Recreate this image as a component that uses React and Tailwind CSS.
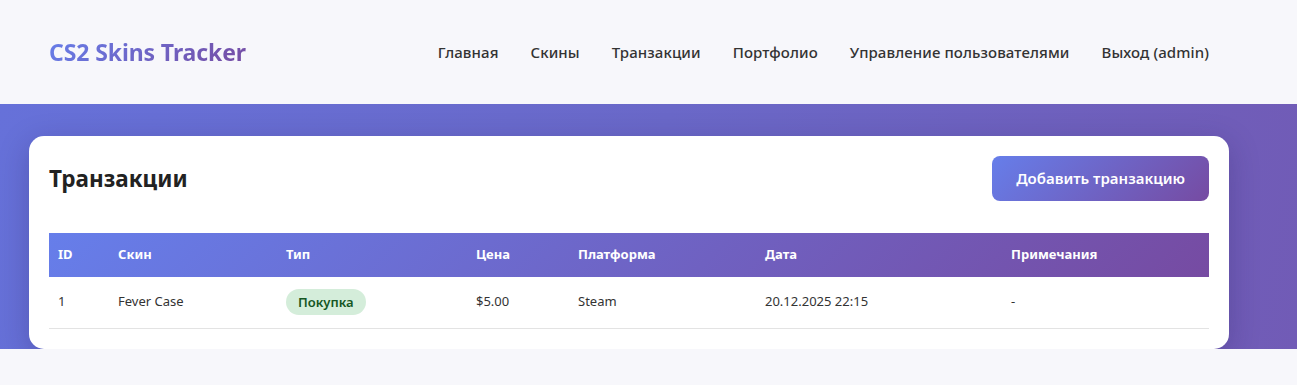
export default function App() {
  const font = { fontFamily: '"Noto Sans", "Open Sans", sans-serif' };
  const navItems = ["Главная", "Скины", "Транзакции", "Портфолио", "Управление пользователями", "Выход (admin)"];
  return (
    <div className="min-h-[385px] bg-[#f7f7fb] text-[#333]" style={font}>
      <header className="h-[104px] bg-[#f7f7fb]">
        <div className="ml-[29px] w-[1200px] h-full px-[20px] flex items-center justify-between">
          <div className="text-[23px] font-bold bg-[linear-gradient(135deg,#667eea_0%,#764ba2_100%)] bg-clip-text text-transparent tracking-[-0.1px]">
            CS2 Skins Tracker
          </div>
          <nav className="flex items-center gap-[32px]">
            {navItems.map((n) => (
              <a key={n} className="text-[15px] font-medium text-[#333] tracking-[0.1px]">{n}</a>
            ))}
          </nav>
        </div>
      </header>
      <main className="bg-[linear-gradient(100deg,#6671d9_0%,#6a68c8_50%,#715bb6_100%)] pt-[32px]">
        <div className="ml-[29px] w-[1200px] bg-white rounded-[15px] shadow-[0_8px_30px_rgba(30,20,80,0.25)] px-[20px] pt-[20px] pb-[20px]">
          <div className="flex items-center justify-between mb-[32px]">
            <h2 className="text-[22.5px] font-bold text-[#222]">Транзакции</h2>
            <button className="h-[45px] px-[24px] rounded-[8px] text-white text-[15px] font-semibold bg-[linear-gradient(135deg,#667eea_0%,#764ba2_100%)]">
              Добавить транзакцию
            </button>
          </div>
          <table className="w-full border-collapse text-left">
            <thead>
              <tr className="h-[44px] bg-[linear-gradient(135deg,#667eea_0%,#764ba2_100%)] text-white text-[13px] font-bold">
                <th className="w-[59px] pl-[9px] font-bold">ID</th>
                <th className="w-[168px] pl-[10px] font-bold">Скин</th>
                <th className="w-[190px] pl-[10px] font-bold">Тип</th>
                <th className="w-[102px] pl-[10px] font-bold">Цена</th>
                <th className="w-[187px] pl-[10px] font-bold">Платформа</th>
                <th className="w-[246px] pl-[10px] font-bold">Дата</th>
                <th className="pl-[10px] font-bold">Примечания</th>
              </tr>
            </thead>
            <tbody>
              <tr className="h-[51px] border-b border-[#e3e3e3] text-[13px] text-[#333]">
                <td className="pl-[9px] pb-[2px]">1</td>
                <td className="pl-[10px] pb-[2px]">Fever Case</td>
                <td className="pl-[10px]">
                  <span className="inline-flex items-center h-[26px] px-[12px] rounded-full bg-[#d4edda] text-[#155724] font-semibold text-[13px]">Покупка</span>
                </td>
                <td className="pl-[10px] pb-[2px]">$5.00</td>
                <td className="pl-[10px] pb-[2px]">Steam</td>
                <td className="pl-[10px] pb-[2px]">20.12.2025 22:15</td>
                <td className="pl-[10px] pb-[2px]">-</td>
              </tr>
            </tbody>
          </table>
        </div>
      </main>
      <div className="relative h-[37px] bg-[#f7f7fb]"></div>
    </div>
  );
}
